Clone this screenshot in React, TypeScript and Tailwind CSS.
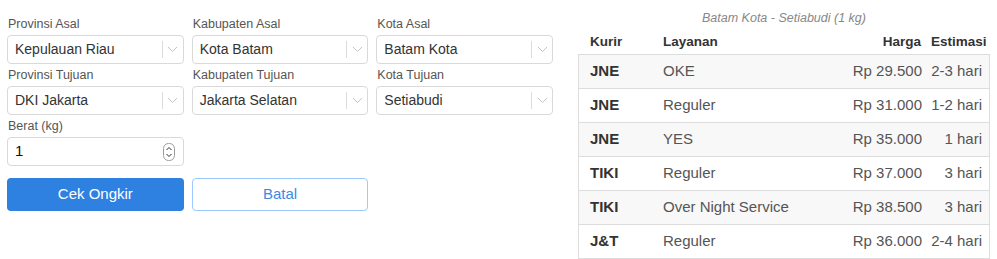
import React from 'react'

const font = { fontFamily: '"Liberation Sans", Arial, sans-serif' }

const rates = [
  { kurir: 'JNE', layanan: 'OKE', harga: 'Rp 29.500', est: '2-3 hari' },
  { kurir: 'JNE', layanan: 'Reguler', harga: 'Rp 31.000', est: '1-2 hari' },
  { kurir: 'JNE', layanan: 'YES', harga: 'Rp 35.000', est: '1 hari' },
  { kurir: 'TIKI', layanan: 'Reguler', harga: 'Rp 37.000', est: '3 hari' },
  { kurir: 'TIKI', layanan: 'Over Night Service', harga: 'Rp 38.500', est: '3 hari' },
  { kurir: 'J&T', layanan: 'Reguler', harga: 'Rp 36.000', est: '2-4 hari' },
]

function Label({ children }: { children: React.ReactNode }) {
  return (
    <div className="h-[22px] flex items-center pl-[1px] text-[12.5px] text-[#555]">
      {children}
    </div>
  )
}

function Select({ label, value }: { label: string; value: string }) {
  return (
    <div>
      <Label>{label}</Label>
      <div className="h-[29px] flex items-center border border-[#d9d9d9] rounded-[4px] bg-white">
        <span className="flex-1 pl-[7px] text-[14px] text-[#333] truncate">{value}</span>
        <span className="w-px h-[17px] bg-[#dcdcdc]" />
        <span className="w-[20px] flex justify-center">
          <svg width="11" height="7" viewBox="0 0 11 7" fill="none">
            <path d="M1 1l4.5 4.5L10 1" stroke="#c4c4c4" strokeWidth="1" />
          </svg>
        </span>
      </div>
    </div>
  )
}

function Spinner() {
  return (
    <svg width="12" height="18" viewBox="0 0 12 18" fill="none">
      <rect x="0.5" y="0.5" width="11" height="17" rx="5" stroke="#9a9a9a" />
      <path d="M3.5 7l2.5-2.5 2.5 2.5" stroke="#333" strokeWidth="1" />
      <path d="M3.5 11l2.5 2.5 2.5-2.5" stroke="#333" strokeWidth="1" />
    </svg>
  )
}

export default function App() {
  return (
    <div className="w-[997px] h-[259px] bg-white flex overflow-hidden" style={font}>
      <div className="w-[578px] pl-[7px] pt-[13px]">
        <div className="w-[546px] grid grid-cols-3 gap-x-[8px]">
          <Select label="Provinsi Asal" value="Kepulauan Riau" />
          <Select label="Kabupaten Asal" value="Kota Batam" />
          <Select label="Kota Asal" value="Batam Kota" />
          <Select label="Provinsi Tujuan" value="DKI Jakarta" />
          <Select label="Kabupaten Tujuan" value="Jakarta Selatan" />
          <Select label="Kota Tujuan" value="Setiabudi" />
          <div>
            <Label>Berat (kg)</Label>
            <div className="h-[29px] flex items-center border border-[#d9d9d9] rounded-[4px] bg-white pr-[8px]">
              <span className="flex-1 pl-[7px] text-[15px] text-[#111]">1</span>
              <Spinner />
            </div>
          </div>
          <div />
          <div />
          <button className="mt-[12px] h-[33px] rounded-[4px] bg-[#2e81e1] text-white text-[15px]">
            Cek Ongkir
          </button>
          <button className="mt-[12px] h-[33px] rounded-[4px] bg-white border border-[#9ccaff] text-[#3a8ae6] text-[15px]">
            Batal
          </button>
        </div>
      </div>
      <div className="w-[412px] pt-[9px]">
        <div className="h-[18px] flex items-center justify-center italic text-[12.5px] text-[#888]">
          Batam Kota - Setiabudi (1 kg)
        </div>
        <div className="h-[27px] flex items-center pt-[4px] text-[13.5px] font-bold text-[#333]">
          <div className="w-[73px] pl-[12px]">Kurir</div>
          <div className="flex-1 pl-[12px]">Layanan</div>
          <div className="w-[100px] text-right pr-[4px]">Harga</div>
          <div className="w-[65px] pl-[6px]">Estimasi</div>
        </div>
        <div className="border border-[#dddddd] border-t-0">
          {rates.map((r, i) => (
            <div
              key={i}
              className={`h-[34px] flex items-center border-t border-[#dddddd] text-[15px] text-[#555] ${
                i % 2 === 0 ? 'bg-[#f8f8f8]' : 'bg-white'
              }`}
            >
              <div className="w-[73px] pl-[11px] font-bold text-[#333]">{r.kurir}</div>
              <div className="flex-1 pl-[11px]">{r.layanan}</div>
              <div className="w-[100px] text-right pr-[3px]">{r.harga}</div>
              <div className="w-[64px] text-right pr-[7px]">{r.est}</div>
            </div>
          ))}
        </div>
      </div>
    </div>
  )
}
